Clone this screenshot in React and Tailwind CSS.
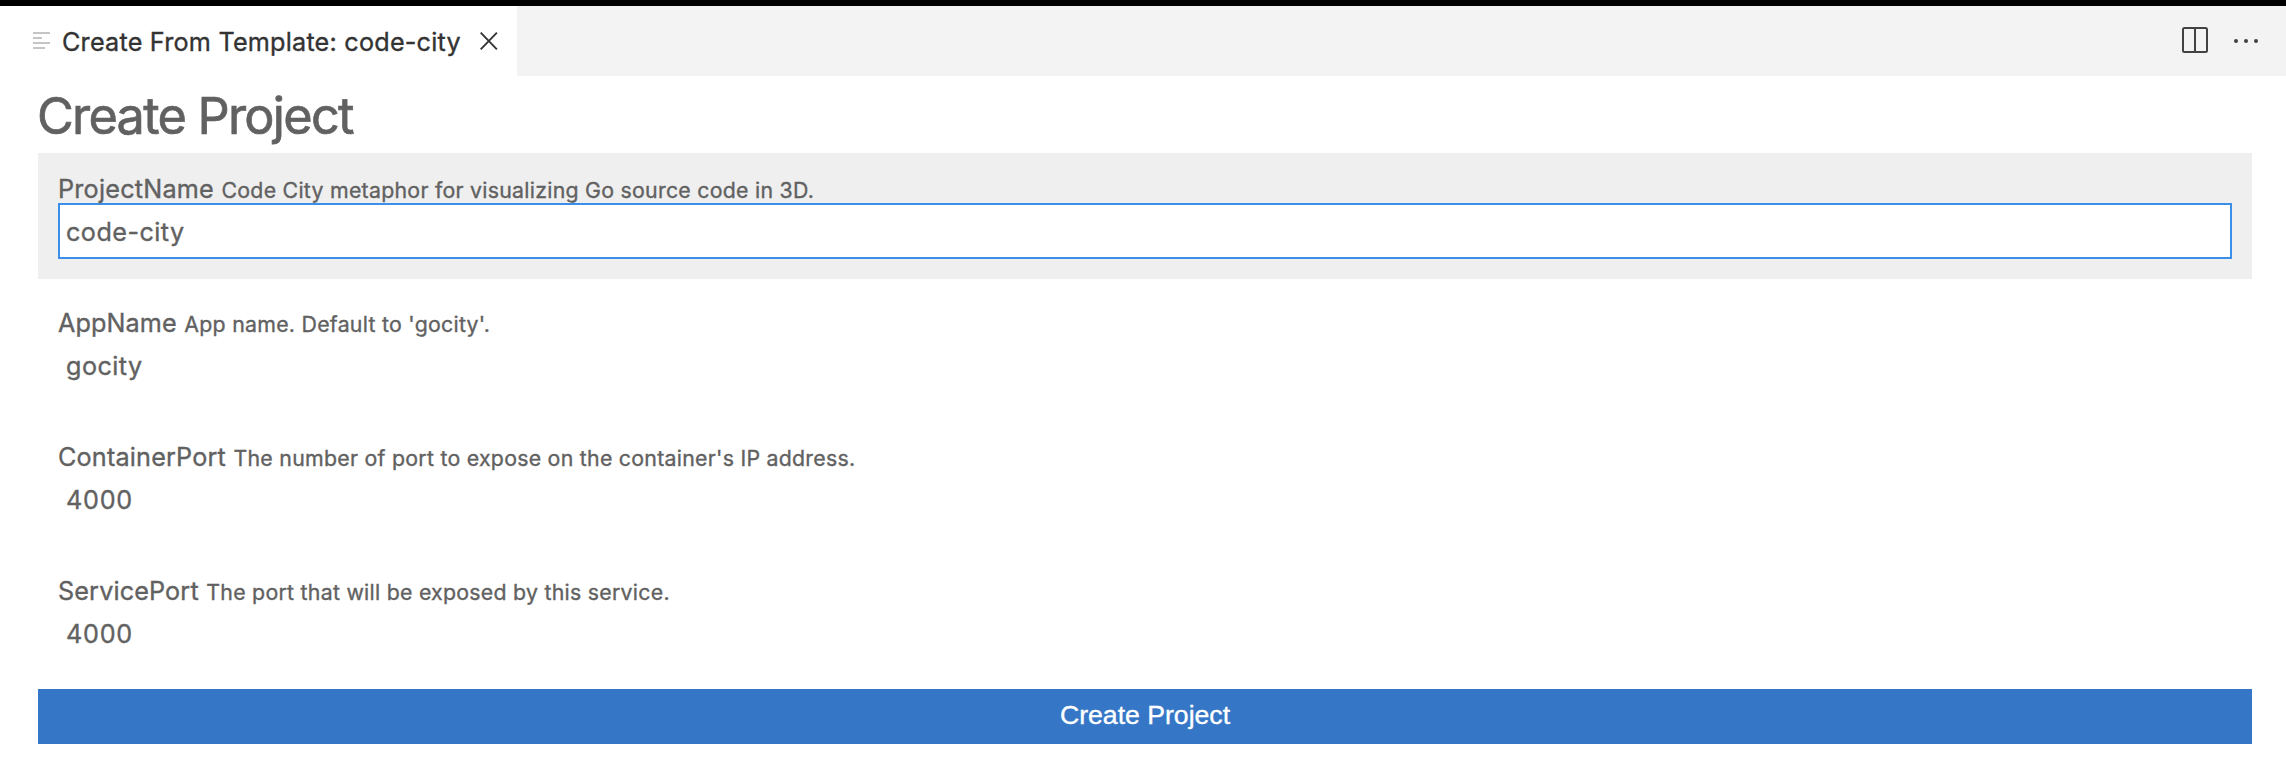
import React from "react";

const FIELDS = [
  { name: "ProjectName", spacing: "tracking-[0.22px]", hint: "Code City metaphor for visualizing Go source code in 3D.", value: "code-city", valueSpacing: "tracking-[0.45px]" },
  { name: "AppName", spacing: "tracking-[0.1px]", hint: "App name. Default to 'gocity'.", value: "gocity", valueSpacing: "tracking-[0.45px]" },
  { name: "ContainerPort", spacing: "tracking-[0.18px]", hint: "The number of port to expose on the container's IP address.", value: "4000", valueSpacing: "tracking-[0.75px]" },
  { name: "ServicePort", spacing: "tracking-[0.14px]", hint: "The port that will be exposed by this service.", value: "4000", valueSpacing: "tracking-[0.75px]" },
];

function TabBar() {
  return (
    <header className="flex h-[70px] justify-between bg-[#f3f3f3]">
      <div className="flex w-[517px] items-center bg-white pl-[33px] text-[#333333]">
        <svg className="shrink-0" width="18" height="20" viewBox="0 0 18 20" fill="#c5c5c5">
          <path d="M0 1h17v2H0zM0 6h9v2H0zM0 11h17v2H0zM0 16h12v2H0z" />
        </svg>
        <span className="ml-[11px] w-[418px] whitespace-nowrap pt-[3px] text-[25.2px] tracking-[0.22px]">
          Create From Template: code-city
        </span>
        <svg className="shrink-0" width="18" height="18" viewBox="0 0 18 18" fill="none" stroke="#333333" strokeWidth="1.9">
          <path d="M.7.7l16.2 16.6M16.9.7L.7 17.3" />
        </svg>
      </div>
      <div className="flex items-center gap-[26px] pr-[28px] text-[#424242]">
        <svg className="-mt-0.5" width="26" height="26" viewBox="0 0 26 26" fill="none" stroke="currentColor" strokeWidth="2">
          <rect x="1" y="1" width="24" height="24" rx="1.5" />
          <path d="M13 1v24" />
        </svg>
        <svg width="24" height="6" viewBox="0 0 24 6" fill="currentColor">
          <circle cx="2" cy="3" r="2" />
          <circle cx="12" cy="3" r="2" />
          <circle cx="22" cy="3" r="2" />
        </svg>
      </div>
    </header>
  );
}

function Field({ field, focused }) {
  return (
    <div className={`h-[126px] px-5 pt-5 ${focused ? "bg-[#efefef]" : ""}`}>
      <label className="block h-[30px] whitespace-nowrap text-[25.2px] leading-[32px]">
        <span className={field.spacing}>{field.name}</span>
        <span className="ml-[7.5px] text-[21.3px] tracking-[0.27px]">{field.hint}</span>
      </label>
      <div className={`flex h-14 items-center border-2 pl-1.5 pt-[3px] text-[25.2px] ${focused ? "border-[#3c8fe9] bg-white" : "border-transparent"}`}>
        <span className={field.valueSpacing}>{field.value}</span>
      </div>
    </div>
  );
}

export default function App() {
  return (
    <div className="h-[780px] w-[2286px] overflow-hidden border-t-[6px] border-black bg-white font-['Inter',sans-serif] text-[#616161] [-webkit-text-stroke:0.35px_currentColor]">
      <TabBar />
      <main className="pl-[38px] pr-[34px]">
        <h1 className="-ml-px h-[77px] text-[50.4px] leading-[79px] tracking-[-1.74px] [-webkit-text-stroke:0.7px_currentColor]">
          Create Project
        </h1>
        <div className="flex flex-col gap-2">
          {FIELDS.map((field, i) => (
            <Field key={field.name} field={field} focused={i === 0} />
          ))}
          <button className="h-[55px] w-full bg-[#3577c6] pb-[3px] font-['Liberation_Sans',sans-serif] text-[26.67px] tracking-[-0.02px] text-white">
            Create Project
          </button>
        </div>
      </main>
    </div>
  );
}
